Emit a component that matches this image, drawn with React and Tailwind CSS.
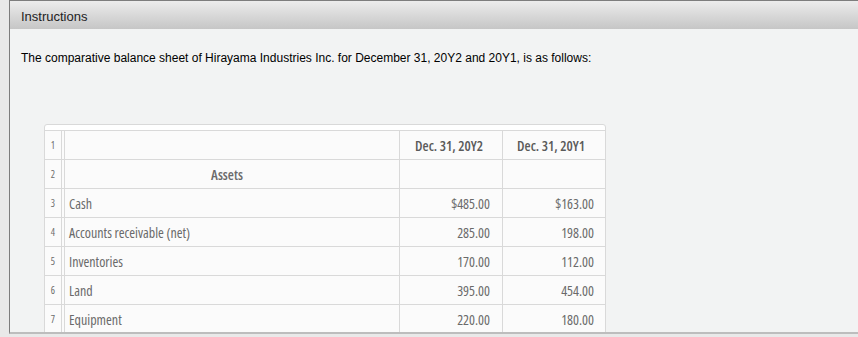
const rows = [
  { n: 2, label: "Assets", head: true },
  { n: 3, label: "Cash", a: "$485.00", b: "$163.00" },
  { n: 4, label: "Accounts receivable (net)", a: "285.00", b: "198.00" },
  { n: 5, label: "Inventories", a: "170.00", b: "112.00" },
  { n: 6, label: "Land", a: "395.00", b: "454.00" },
  { n: 7, label: "Equipment", a: "220.00", b: "180.00" },
]

// condensed look via Open Sans + font-stretch
const narrow = { fontFamily: '"Open Sans", sans-serif', fontStretch: "77%" }

function Row({ n, label, a, b, head }) {
  return (
    <div className="flex h-[29px] border-b border-[#d9d9d9]">
      <div className="w-[17px] border-r border-[#d9d9d9] flex items-center justify-center text-[10px] text-[#6b6b6b]">{n}</div>
      <div className="w-[2px]"></div>
      <div
        className={
          "w-[336px] border-l border-r border-[#d9d9d9] flex items-center px-1 text-[14px] text-[#6a6a6a] " +
          (head ? "justify-center font-semibold pr-[14px] text-[#5a5a5a]" : "")
        }
      >
        {label}
      </div>
      <div className="w-[103px] border-r border-[#d9d9d9] flex items-center justify-end pr-[12px] text-[14px] text-[#6a6a6a]">{a}</div>
      <div className="w-[102px] flex items-center justify-end pr-[11px] text-[14px] text-[#6a6a6a]">{b}</div>
    </div>
  )
}

export default function App() {
  return (
    <div className="w-[858px] h-[337px] bg-[#e9e9e9] overflow-hidden">
      <div className="ml-[9px] h-[334px] border-l border-t border-b-2 border-[#7d7d7d] border-b-[#bdbdbd] bg-[#f2f3f3] overflow-hidden" style={{ fontFamily: '"Liberation Sans", Arial, sans-serif' }}>
        <div className="h-[28px] bg-gradient-to-b from-[#ececec] to-[#c6c6c6] flex items-center pl-[11px] pt-[3px] text-[13px] text-[#222]">
          Instructions
        </div>
        <p className="mt-[20px] ml-[11px] text-[12px] leading-[18px] text-black">
          The comparative balance sheet of Hirayama Industries Inc. for December 31, 20Y2 and 20Y1, is as follows:
        </p>

        {/*---balance sheet table---- */}
        <div className="mt-[57px] ml-[34px] w-[562px] border border-[#d9d9d9] rounded-t-[3px] bg-white pt-[5px]" style={narrow}>
          <div className="border-t border-[#d9d9d9] bg-[#fbfbfb]">
            <div className="flex h-[29px] border-b border-[#d9d9d9]">
              <div className="w-[17px] border-r border-[#d9d9d9] flex items-center justify-center text-[10px] text-[#6b6b6b]">1</div>
              <div className="w-[2px]"></div>
              <div className="w-[336px] border-l border-r border-[#d9d9d9]"></div>
              <div className="w-[103px] border-r border-[#d9d9d9] flex items-center justify-center pr-[4px] font-semibold text-[14px] text-[#5a5a5a]">Dec. 31, 20Y2</div>
              <div className="w-[102px] flex items-center justify-center pr-[6px] font-semibold text-[14px] text-[#5a5a5a]">Dec. 31, 20Y1</div>
            </div>
            {rows.map((r) => (
              <Row key={r.n} {...r} />
            ))}
          </div>
        </div>
      </div>
    </div>
  )
}
